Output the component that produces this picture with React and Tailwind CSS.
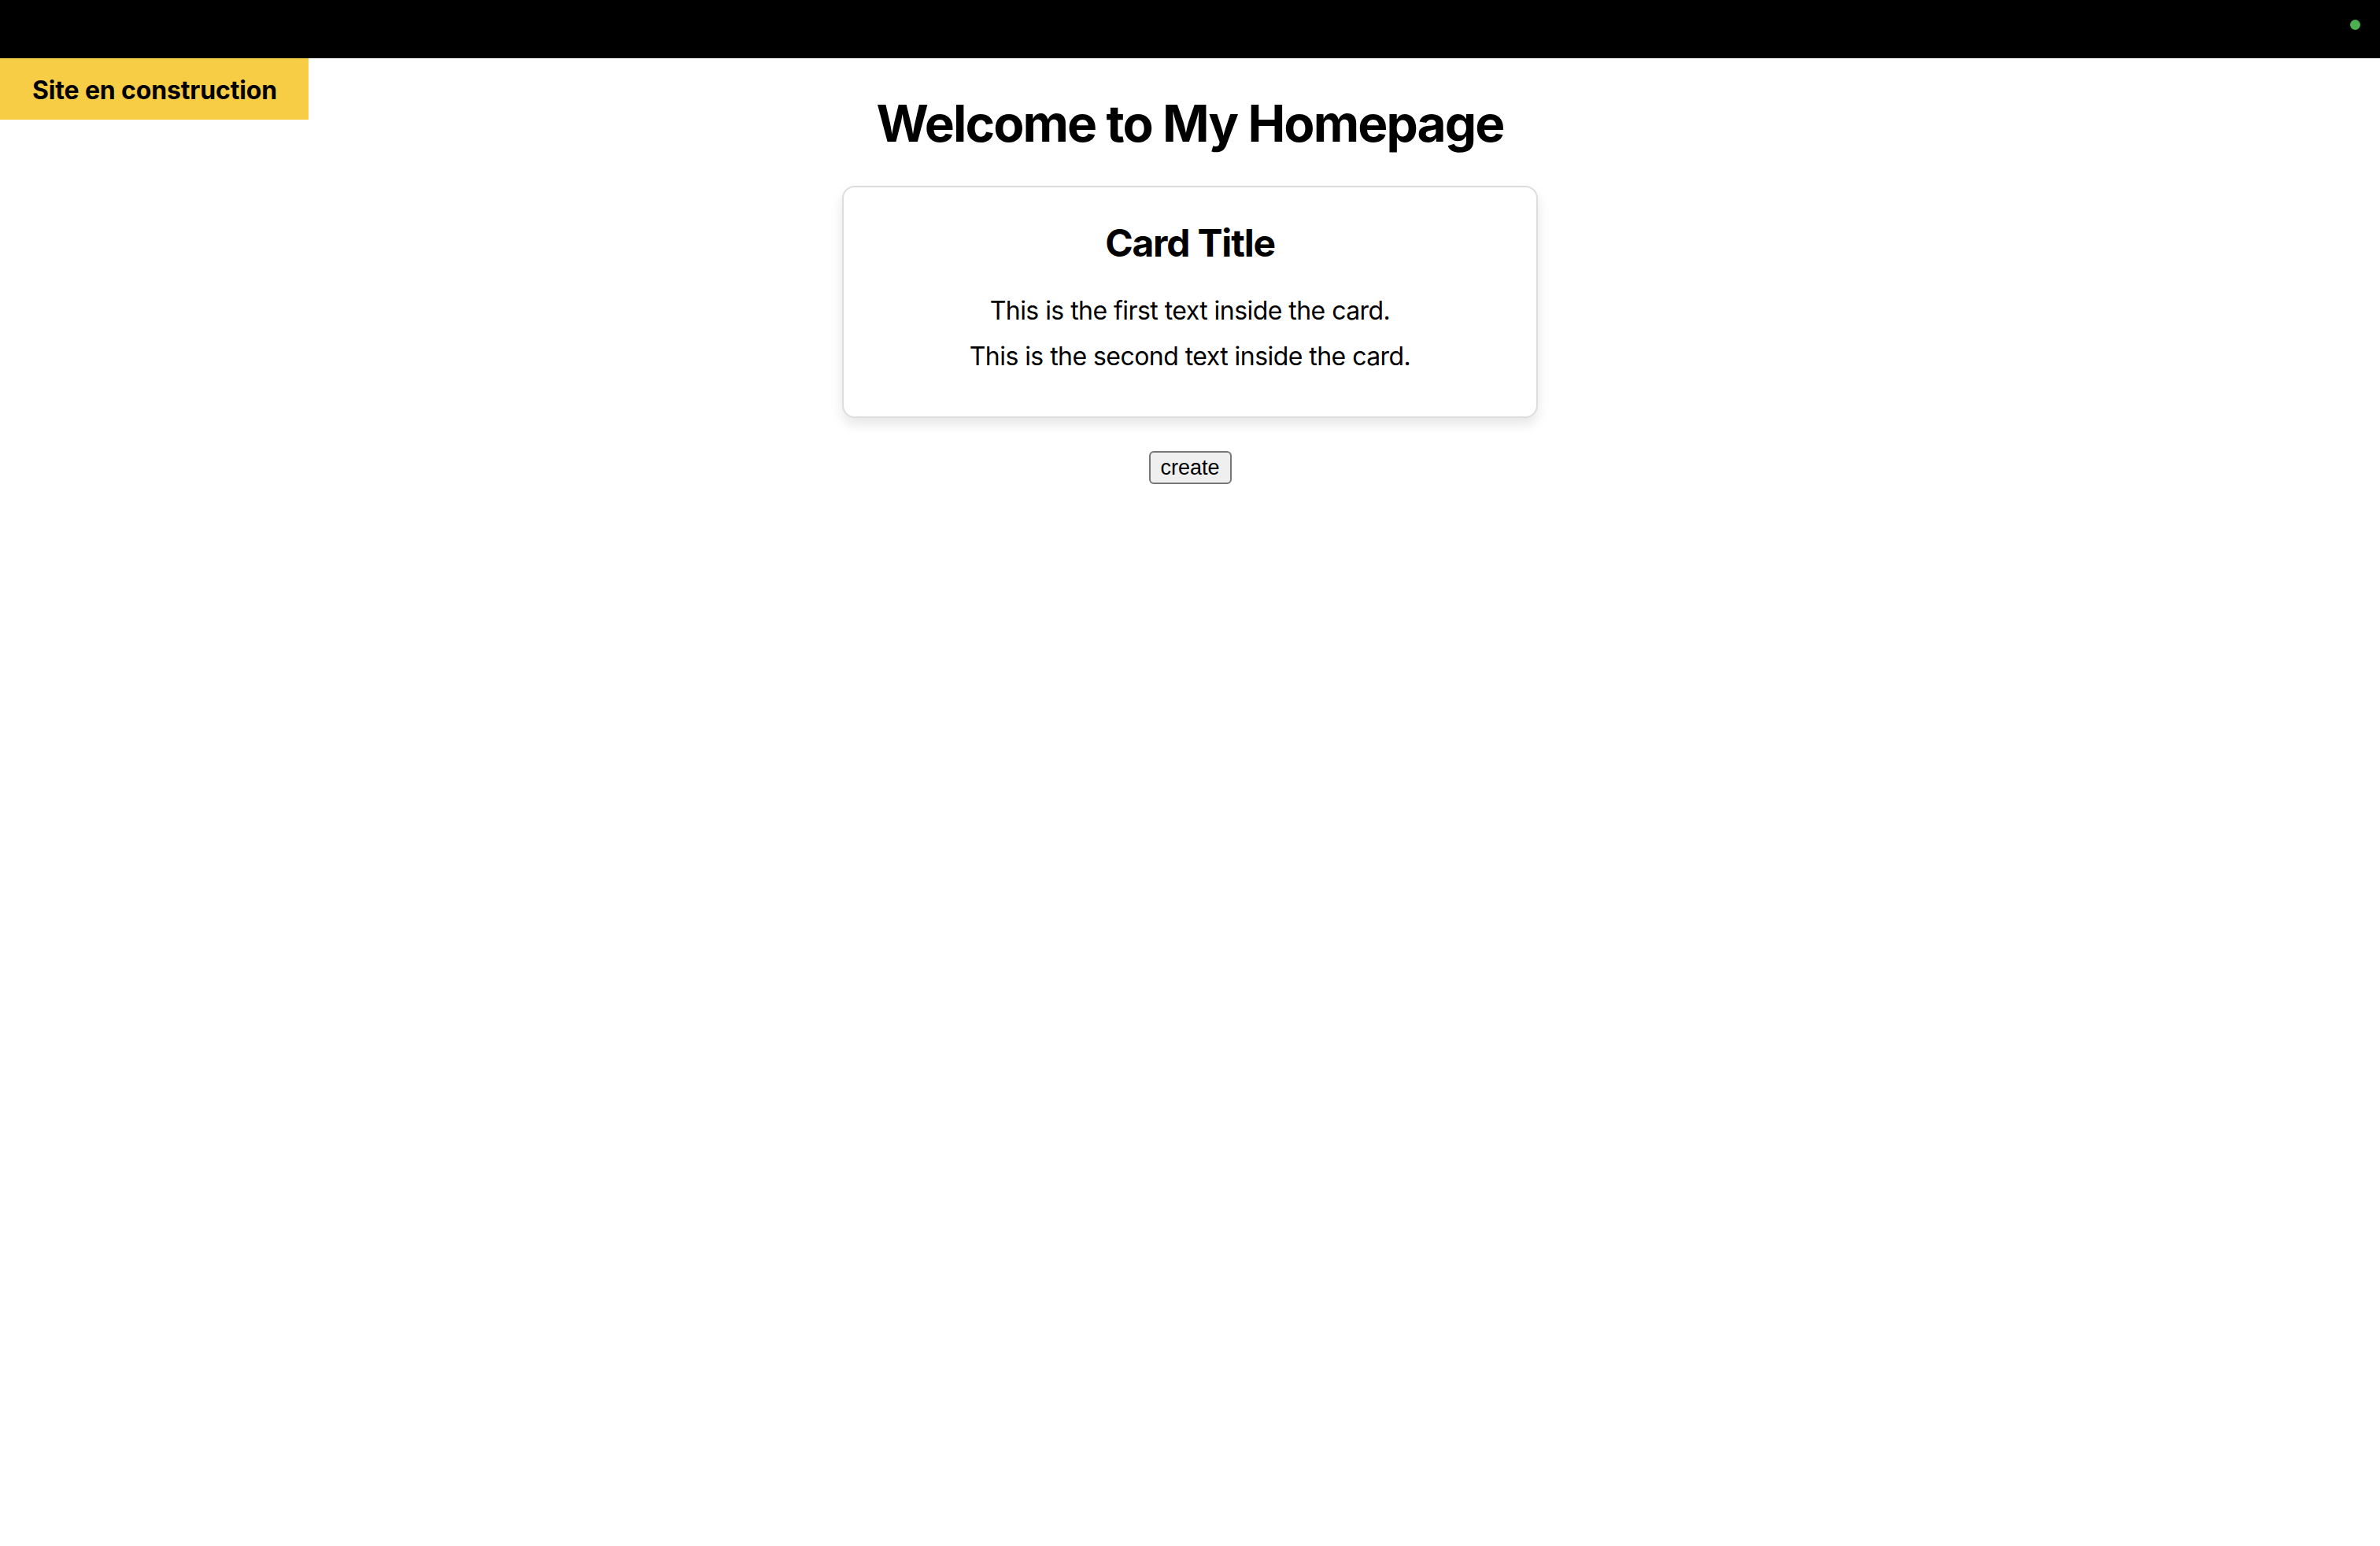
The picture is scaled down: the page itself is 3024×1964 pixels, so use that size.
export default function App() {
  return (
    <div className="relative min-h-screen bg-white font-['Inter',sans-serif] text-black">
      {/* top bar */}
      <div className="flex h-[74px] items-start justify-end bg-black pr-[25px] pt-[25px]">
        <span className="h-[13px] w-[13px] rounded-full bg-[#4caf50]" />
      </div>

      <div className="absolute left-0 top-[74px] flex h-[78px] w-[392px] items-center bg-[#f8cd46] pl-[41px] pt-[3px]">
        <span className="text-[32px] font-bold leading-none tracking-[-0.15px]">Site en construction</span>
      </div>

      <main className="flex flex-col items-center">
        <h1 className="mt-[44px] text-[64px] font-bold leading-[77px] tracking-[-1.9px]">Welcome to My Homepage</h1>

        <div className="mt-[41px] flex w-[884px] flex-col items-center rounded-[16px] border-2 border-[#dddddd] bg-white pb-[52px] pt-[42px] shadow-[0_8px_16px_rgba(0,0,0,0.1)]">
          <h2 className="text-[48px] font-bold leading-[58px] tracking-[-1.2px]">Card Title</h2>
          <p className="mt-[33px] text-[32px] leading-[48px] tracking-[-0.55px]">This is the first text inside the card.</p>
          <p className="mt-[10px] text-[32px] leading-[48px] tracking-[-0.55px]">This is the second text inside the card.</p>
        </div>

        <button className="mt-[42px] h-[42px] w-[105px] rounded-[6px] border-2 border-[#767676] bg-[#efefef] font-['Liberation_Sans',sans-serif] text-[27px] leading-none">
          create
        </button>
      </main>
    </div>
  );
}
